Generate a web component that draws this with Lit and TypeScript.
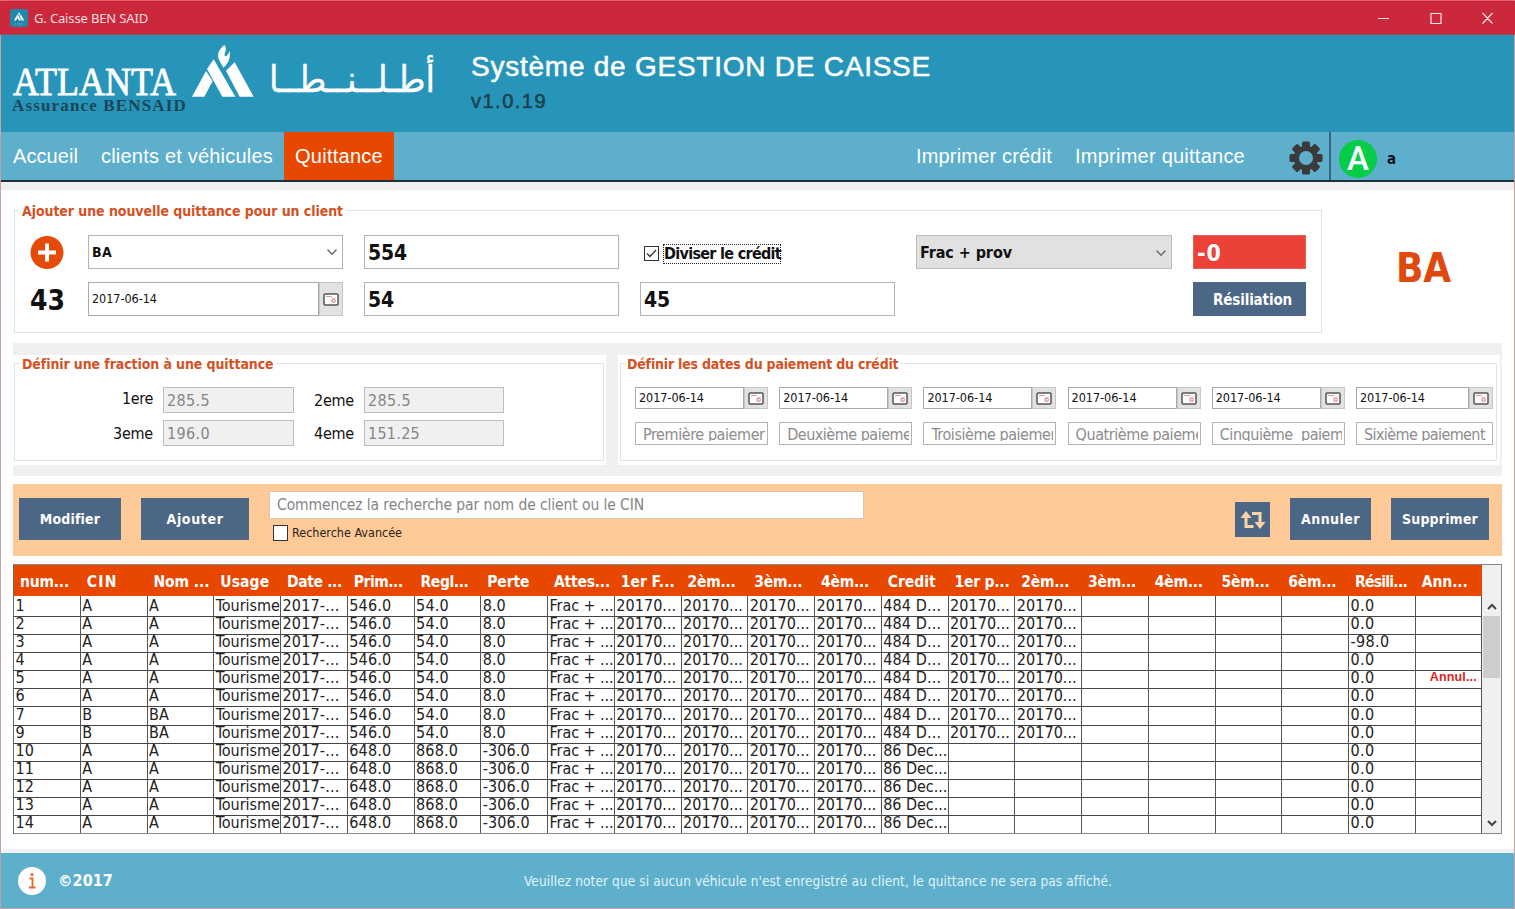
import { LitElement, html, css, svg, nothing } from "lit";
import { customElement, property } from "lit/decorators.js";
import { classMap } from "lit/directives/class-map.js";

/** A single line of text tracked so that it takes exactly `w` pixels. */
@customElement("fit-text")
class FitText extends LitElement {
  @property({ type: Number }) w = 0;
  @property() text = "";

  static styles = css`
    :host { display: inline-block; white-space: pre; }
  `;

  updated() {
    const span = this.renderRoot.querySelector("span") as HTMLElement;
    span.style.letterSpacing = "0px";
    if (!this.w) return;
    const natural = span.getBoundingClientRect().width;
    span.style.letterSpacing = `${(this.w - natural) / this.text.length}px`;
  }

  render() {
    return html`<span>${this.text}</span>`;
  }
}

const fit = (text: string, w = 0) => html`<fit-text .text=${text} .w=${w}></fit-text>`;

const calendarIcon = svg`
  <rect x="1" y="1" width="14" height="11" rx="1" fill="#fff" stroke="#555" stroke-width="1.500"/>
  <path d="M3 3.500h6" stroke="#d8a0a0" stroke-width="1"/>
  <path d="M9 5h4M9 5v5" stroke="#d8c0c0" stroke-width=".8"/>
  <circle cx="10.800" cy="7.800" r="1.600" fill="none" stroke="#c77" stroke-width="1"/>`;

@customElement("date-field")
class DateField extends LitElement {
  @property() value = "";
  static styles = css`
    :host { display: flex; height: 100%; }
    .box { flex: 1; border: 1px solid #aaa; background: #fff; display: flex; align-items: center; padding-left: 3px; }
    .btn { width: 22px; margin: 0; border: 1px solid #c6c6c6; background: #e2e2e2; display: flex; align-items: center; justify-content: center; }
    svg { width: 16px; height: 13px; }
  `;
  render() {
    return html`<div class="box">${fit(this.value, 65)}</div>
      <div class="btn"><svg viewBox="0 0 16 13">${calendarIcon}</svg></div>`;
  }
}

const headers: [string, number][] = [
  ["num...", 49], ["CIN", 31], ["Nom ...", 56], ["Usage", 49], ["Date ...", 55], ["Prim...", 49],
  ["Regl...", 48], ["Perte", 42], ["Attes...", 56], ["1er F...", 54], ["2èm...", 48], ["3èm...", 48],
  ["4èm...", 48], ["Credit", 48], ["1er p...", 55], ["2èm...", 48], ["3èm...", 48], ["4èm...", 48],
  ["5èm...", 48], ["6èm...", 48], ["Résili...", 52], ["Ann...", 46],
];

const widths: Record<string, number> = {
  "Tourisme": 64, "2017-...": 57, "546.0": 42, "648.0": 42, "868.0": 42, "54.0": 33, "8.0": 23,
  "-306.0": 47, "Frac + ...": 64, "20170...": 60, "484 D...": 58, "86 Dec...": 64, "0.0": 24, "-98.0": 39,
};

const D = "20170...";
const early = (n: string, cin: string, nom: string, res = "0.0", ann = "") =>
  [n, cin, nom, "Tourisme", "2017-...", "546.0", "54.0", "8.0", "Frac + ...", D, D, D, D, "484 D...", D, D, "", "", "", "", res, ann];
const late = (n: string) =>
  [n, "A", "A", "Tourisme", "2017-...", "648.0", "868.0", "-306.0", "Frac + ...", D, D, D, D, "86 Dec...", "", "", "", "", "", "", "0.0", ""];

const rows = [
  early("1", "A", "A"), early("2", "A", "A"), early("3", "A", "A", "-98.0"), early("4", "A", "A"),
  early("5", "A", "A", "0.0", "Annul..."), early("6", "A", "A"), early("7", "B", "BA"), early("9", "B", "BA"),
  late("10"), late("11"), late("12"), late("13"), late("14"),
];

const payments = [
  "Première paiement", "Deuxième paiement", "Troisième paiement",
  "Quatrième paiement", "Cinquième  paiement", "Sixième paiement",
];
const paymentWidths = [130, 138, 133, 142, 146, 121];

@customElement("app-root")
class AppRoot extends LitElement {
  static styles = css`
    :host {
      display: block; width: 1515px; height: 909px; overflow: hidden; color: #111;
      font-family: "DejaVu Sans Condensed", "DejaVu Sans", sans-serif; font-stretch: condensed; font-size: 16px; line-height: 1;
    }
    * { box-sizing: border-box; }
    .window { height: 909px; display: grid; grid-template-rows: 34px 97px 50px 671px 55px; background: #fff; border: 1px solid #c4a3a8; border-top-color: #e26073; }

    .titlebar { background: #cb293b; border-bottom: 1px solid #a54a5d; margin: 0 -1px; padding: 0 21px 0 10px; display: flex; align-items: center; color: #f6dde0; font: 13px "Noto Sans", sans-serif; }
    .titlebar .app { width: 18px; height: 18px; margin-right: 6px; }
    .controls { margin-left: auto; width: 117px; height: 14px; }

    .header { background: #2795ba; display: grid; grid-template-columns: 180px 75px 215px 1fr; }
    .brand { padding: 29px 0 0 11px; white-space: nowrap; }
    .name { display: block; width: 166px; height: 33px; overflow: visible; font-family: "Liberation Serif", serif; }
    .brand .sub { font: bold 17px/18px "Liberation Serif", serif; color: #1c4555; height: 18px; }
    .mark { width: 63px; height: 54px; margin: 10px 0 0 11px; }
    .arabic { width: 176px; height: 60px; margin: 12px 0 0 8px; overflow: visible; font-family: "DejaVu Sans", sans-serif; font-stretch: normal; }
    .heading { font-family: "Liberation Sans", sans-serif; padding-top: 16px; }
    .heading .title { font-size: 28px; line-height: 32px; color: #fff; -webkit-text-stroke: .5px #fff; }
    .heading .version { font-size: 20px; line-height: 24px; margin-top: 6px; color: #1d4352; -webkit-text-stroke: .6px #1d4352; }

    .nav { background: #5eafcc; border-bottom: 2px solid #1d323c; display: flex; font: 20px/48px "Liberation Sans", sans-serif; color: #fff; }
    .nav .item { height: 48px; }
    .nav .home { margin: 0 23px 0 12px; }
    .nav .tab { width: 110px; margin-left: 11px; padding-left: 11px; background: #e84700; }
    .nav .print1 { margin: 0 23px 0 522px; }
    .gear { width: 34px; height: 34px; margin: 9px 6px 0 44px; }
    .sep { width: 2px; background: #38677c; }
    .avatar { width: 38px; height: 38px; margin: 8px 10px 0 8px; border-radius: 50%; background: #05cd4a; display: flex; justify-content: center; font: 500 33px/38px Roboto, sans-serif; }
    .user { font: bold 15px/54px "DejaVu Sans Condensed", sans-serif; color: #112; }

    .main { background: #fff; border-top: 8px solid #f0f0f0; border-bottom: 4px solid #f0f0f0; padding: 0 12px 0 12px; display: grid; grid-template-rows: 153px 133px 8px 72px 8px 270px; }

    .group { position: relative; border: 1px solid #e3e3e3; }
    .legend { position: absolute; top: -8px; left: 5px; padding: 0 3px 0 2px; background: #fff; color: #d5511f; font-weight: bold; font-size: 14px; line-height: 16px; height: 16px; white-space: nowrap; }
    .top { display: flex; }
    .newrec { width: 1308px; height: 123px; margin: 20px 0 0 1px; padding: 24px 14px 15px 0; display: grid; grid-template-columns: 52px 255px 255px 255px 256px 113px; column-gap: 21px; grid-template-rows: 34px 34px; row-gap: 13px; }
    .plus { width: 34px; height: 34px; margin-left: 15px; }
    .num { font-weight: bold; font-size: 28px; line-height: 37px; padding-left: 15px; }
    .field { border: 1px solid #b4b4b4; background: #fff; display: flex; align-items: center; padding-left: 3px; font-weight: bold; font-size: 21px; padding-top: 3px; }
    .combo { font-size: 14px; justify-content: space-between; padding-right: 4px; padding-top: 0; }
    .combo svg { width: 12px; height: 8px; }
    .combo.grey { background: #e1e1e1; font-size: 16px; border-color: #bbb; padding-top: 1px; }
    .date { font-size: 12.500px; }
    .check { display: flex; align-items: center; padding: 3px 0 0 4px; font-weight: bold; }
    .check svg { width: 15px; height: 15px; margin-right: 4px; }
    .focus { border: 1px dotted #222; height: 20px; line-height: 18px; width: 118px; }
    .debt { background: #ec4137; color: #fff; border: 1px solid #e0655c; font-weight: bold; font-size: 23px; line-height: 34px; padding-left: 3px; }
    .btn { background: #4c6685; color: #fff; font-weight: bold; font-size: 14px; display: flex; align-items: center; justify-content: center; }
    .btn.cancel { font-size: 15px; padding: 2px 0 0 6px; }
    .client { font-size: 40px; line-height: 40px; font-weight: bold; color: #df4a0c; margin: 58px 0 0 74px; }

    .split { background: #f0f0f0; padding: 12px 2px 11px 0; display: grid; grid-template-columns: 593px 1fr; column-gap: 12px; }
    .panel { background: #fff; padding: 8px 2px 4px 1px; }
    .panel .group { height: 98px; }
    .panel.credit { padding: 8px 3px 4px 2px; }
    .credit .legend { left: 4px; }
    .frac { padding: 23px 0 0 88px; display: grid; grid-template-columns: 50px 131px 50px 140px; grid-template-rows: 26px 26px; column-gap: 10px; row-gap: 7px; }
    .lab { text-align: right; line-height: 28px; }
    .lab.first { line-height: 23px; }
    .ro { border: 1px solid #bdbdbd; background: #f0f0f0; color: #868686; line-height: 26px; padding-left: 3px; }
    .pay { padding: 23px 0 0 14px; display: grid; grid-template-columns: repeat(5, 133px) 137px; grid-template-rows: 22px 23px; column-gap: 11.200px; row-gap: 13px; font-size: 12.500px; }
    .ph { border: 1px solid #b4b4b4; padding: 3px 2px 3px 7px; font-size: 16px; color: #8c8c8c; }
    .clip { height: 15px; line-height: 17px; overflow: hidden; }

    .tools { background: #fecb98; display: grid; grid-template-columns: 102px 108px 595px 1fr 35px 81px 98px; column-gap: 20px; padding: 14px 13px 0 6px; align-items: start; }
    .tools .btn { height: 42px; }
    .tools .btn.refresh { height: 35px; margin: 4px 0 0; }
    .refresh svg { width: 26px; height: 18px; }
    .search { margin-top: -7px; }
    .input { height: 28px; border: 1px solid #d9c5b0; background: #fff; color: #858585; line-height: 27px; padding-left: 7px; font-size: 15.500px; }
    .adv { display: flex; align-items: center; margin: 6px 0 0 4px; font-size: 12.500px; color: #2d2118; }
    .adv i { width: 15px; height: 16px; border: 1px solid #333; background: #fff; margin-right: 4px; }

    .table { border: 1px solid #8a8a8a; border-left-color: #666; display: grid; grid-template-columns: 1468px 1fr; width: 1489px; overflow: hidden; }
    .grid { display: grid; grid-template-rows: 31px repeat(13, 18.100px) 1px; }
    .row { display: grid; grid-template-columns: repeat(21, 66.760px) 1fr; }
    .head { background: #e84700; color: #fff; font-weight: bold; font-size: 15.500px; }
    .head div { padding-left: 6px; line-height: 34px; }
    .cell { border-right: 1px solid #555; border-bottom: 1px solid #444; padding-left: 1.500px; line-height: 20px; white-space: nowrap; overflow: visible; color: #222; }
    .void { color: #df2323; font: bold 12.500px/19px "Liberation Sans", sans-serif; padding-left: 14px; }
    .scroll { background: #f0f0f0; display: grid; grid-template-rows: 31px 20px 62px 1fr 20px; justify-items: center; align-items: center; }
    .thumb { grid-row: 3; width: 17px; height: 62px; background: #cdcdcd; }
    .scroll svg { width: 10px; height: 7px; }
    .up { grid-row: 2; }
    .down { grid-row: 5; }

    .footer { background: #5eafcc; display: flex; align-items: center; color: #fff; }
    .info { width: 28px; height: 28px; margin: 0 12px 0 17px; }
    .copy { font-weight: bold; font-size: 16px; width: 466px; }
    .note { color: #e0f4fa; font-size: 13.500px; padding-top: 2px; }
  `;

  private chevron() {
    return svg`<path d="M1.500 1.500 6 6.200 10.500 1.500" fill="none" stroke="#666" stroke-width="1.300"/>`;
  }

  private gear() {
    return html`<svg class="gear" viewBox="-17 -17 34 34">
      ${[0, 45, 90, 135].map((a) => svg`<rect x="-4" y="-16.500" width="8" height="33" rx="1.500" fill="#3a3a3a" transform="rotate(${a})"/>`)}
      <circle r="12.300" fill="#3a3a3a"/><circle r="7" fill="#5eafcc"/>
    </svg>`;
  }

  private mountain() {
    return svg`<path fill="#fff" d="M0 155 42 78 62 108 37 155ZM45 72 65 43 130 155H91ZM102 77 128 52 185 155H143ZM97 0C76 16 76 34 81 44L94 68C105 58 117 45 113 17C107 33 100 37 98 32C96 23 108 12 97 0Z"/>`;
  }

  render() {
    return html`<div class="window">
      <div class="titlebar">
        <svg class="app" viewBox="0 0 18 18"><rect width="18" height="18" rx="3" fill="#1f88ab"/>
          <g transform="translate(4 3) scale(.055)">${this.mountain()}</g><path d="M5 15h8" stroke="#6fc3dc" stroke-dasharray="1 1"/></svg>
        ${fit("G. Caisse BEN SAID", 114)}
        <svg class="controls" viewBox="0 0 117 14" fill="none" stroke="#fbe6e8" stroke-width="1.200">
          <path d="M1 7.500h11M54 2.500h10v10h-10zM105.500 2l10 10.500M115.500 2l-10 10.500"/></svg>
      </div>

      <div class="header">
        <div class="brand"><svg class="name" viewBox="0 0 166 33"><text x="1" y="31" font-size="41" fill="#fff" stroke="#fff" stroke-width=".8" textLength="163" lengthAdjust="spacingAndGlyphs">ATLANTA</text></svg>
          <div class="sub">${fit("Assurance BENSAID", 175)}</div></div>
        <svg class="mark" viewBox="0 0 189 162">${this.mountain()}</svg>
        <svg class="arabic" viewBox="0 0 176 60"><text x="5" y="45" font-size="37" fill="#fff" stroke="#fff" stroke-width=".4" direction="ltr" textLength="166" lengthAdjust="spacingAndGlyphs">أطـلــنــطــا</text></svg>
        <div class="heading"><div class="title">${fit("Système de GESTION DE CAISSE", 460)}</div><div class="version">${fit("v1.0.19", 76)}</div></div>
      </div>

      <div class="nav">
        <div class="item home">${fit("Accueil", 65)}</div>
        <div class="item">${fit("clients et véhicules", 172)}</div>
        <div class="item tab">${fit("Quittance", 88)}</div>
        <div class="item print1">${fit("Imprimer crédit", 136)}</div>
        <div class="item">${fit("Imprimer quittance", 170)}</div>
        ${this.gear()}
        <div class="sep"></div>
        <div class="avatar">A</div>
        <div class="user">a</div>
      </div>

      <div class="main">
        <div class="top">
          <div class="group newrec">
            <div class="legend">${fit("Ajouter une nouvelle quittance pour un client", 321)}</div>
            <svg class="plus" viewBox="0 0 34 34"><circle cx="17" cy="17.500" r="16.500" fill="#e44a08"/><path d="M17 8.500v18M8 17.500h18" stroke="#fff" stroke-width="4"/></svg>
            <div class="field combo">${fit("BA", 20)}<svg viewBox="0 0 12 8">${this.chevron()}</svg></div>
            <div class="field">${fit("554", 39)}</div>
            <div class="check">
              <svg viewBox="0 0 15 15"><rect x=".5" y=".5" width="14" height="14" fill="#fff" stroke="#333"/><path d="M3 7.500 6 10.500 12 4" fill="none" stroke="#333" stroke-width="1.300"/></svg>
              <div class="focus">${fit("Diviser le crédit", 117)}</div>
            </div>
            <div class="field combo grey">${fit("Frac + prov", 92)}<svg viewBox="0 0 12 8">${this.chevron()}</svg></div>
            <div class="debt">${fit("-0", 25)}</div>
            <div class="num">${fit("43", 35)}</div>
            <date-field class="date" value="2017-06-14"></date-field>
            <div class="field">${fit("54", 26)}</div>
            <div class="field">${fit("45", 26)}</div>
            <div></div>
            <div class="btn cancel">${fit("Résiliation", 79)}</div>
          </div>
          <div class="client">${fit("BA", 55)}</div>
        </div>

        <div class="split">
          <div class="panel"><div class="group frac">
            <div class="legend">${fit("Définir une fraction à une quittance", 251)}</div>
            <div class="lab first">${fit("1ere", 31)}</div><div class="ro">${fit("285.5", 43)}</div>
            <div class="lab">${fit("2eme", 40)}</div><div class="ro">${fit("285.5", 43)}</div>
            <div class="lab">${fit("3eme", 40)}</div><div class="ro">${fit("196.0", 43)}</div>
            <div class="lab">${fit("4eme", 40)}</div><div class="ro">${fit("151.25", 52)}</div>
          </div></div>
          <div class="panel credit"><div class="group pay">
            <div class="legend">${fit("Définir les dates du paiement du crédit", 271)}</div>
            ${payments.map(() => html`<date-field value="2017-06-14"></date-field>`)}
            ${payments.map((p, i) => html`<div class="ph"><div class="clip">${fit(p, paymentWidths[i])}</div></div>`)}
          </div></div>
        </div>

        <div></div>
        <div class="tools">
          <div class="btn">${fit("Modifier", 60)}</div>
          <div class="btn">${fit("Ajouter", 57)}</div>
          <div class="search">
            <div class="input">${fit("Commencez la recherche par nom de client ou le CIN", 367)}</div>
            <div class="adv"><i></i>${fit("Recherche Avancée", 110)}</div>
          </div>
          <div></div>
          <div class="btn refresh"><svg viewBox="0 0 26 18" fill="none" stroke="#fbd3a8" stroke-width="3">
            <path d="M6 5v10.500h7.500M12 2.500h8V13"/><path d="M6 0 .5 7h11zM20 18l-5.500-7h11z" fill="#fbd3a8" stroke="none"/></svg></div>
          <div class="btn">${fit("Annuler", 59)}</div>
          <div class="btn">${fit("Supprimer", 76)}</div>
        </div>
        <div></div>

        <div class="table">
          <div class="grid">
            <div class="row head">${headers.map(([t, w]) => html`<div>${fit(t, w)}</div>`)}</div>
            ${rows.map((r) => html`<div class="row">${r.map((c, i) => html`<div class=${classMap({ cell: true, void: i === 21 })}>${c ? fit(c, i === 21 ? 47 : widths[c] ?? 0) : nothing}</div>`)}</div>`)}
          </div>
          <div class="scroll">
            <svg class="up" viewBox="0 0 10 7"><path d="M1 6l4-4 4 4" fill="none" stroke="#444" stroke-width="2"/></svg>
            <div class="thumb"></div>
            <svg class="down" viewBox="0 0 10 7"><path d="M1 1l4 4 4-4" fill="none" stroke="#444" stroke-width="2"/></svg>
          </div>
        </div>
      </div>

      <div class="footer">
        <svg class="info" viewBox="0 0 28 28"><circle cx="14" cy="14" r="14" fill="#fff"/><path d="M11.500 11.500h3v8.500M11 20.500h6.500" stroke="#e8642c" stroke-width="1.800" fill="none"/><circle cx="14" cy="7.500" r="1.600" fill="#e8642c"/></svg>
        <div class="copy">${fit("©2017", 55)}</div>
        <div class="note">${fit("Veuillez noter que si aucun véhicule n'est enregistré au client, le quittance ne sera pas affiché.", 588)}</div>
      </div>
    </div>`;
  }
}
